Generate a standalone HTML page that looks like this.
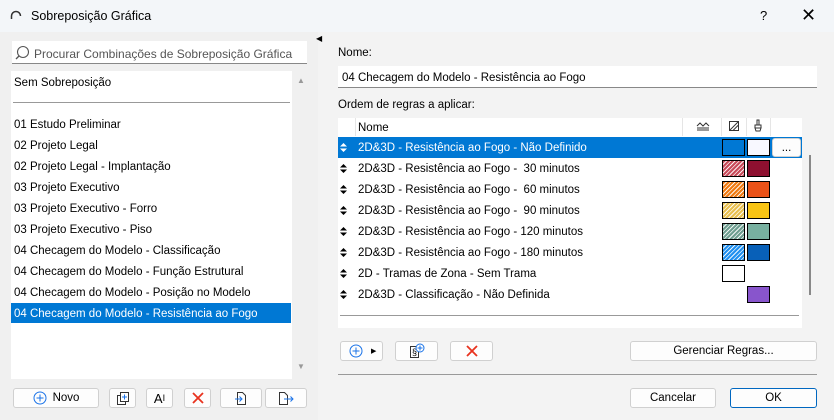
<!DOCTYPE html>
<html><head><meta charset="utf-8"><style>
*{box-sizing:border-box;margin:0;padding:0}
body{width:834px;height:420px;overflow:hidden;background:#f0f0f0;font-family:"Liberation Sans",sans-serif;font-size:11.5px;color:#000;position:relative}
.a{position:absolute}
.btn{position:absolute;background:#fdfdfd;border:1px solid #d0d0d0;border-radius:3px;display:flex;align-items:center;justify-content:center;font-size:11.5px}
.li{position:absolute;left:14px;font-size:11.5px}
.row{position:absolute;left:338px;width:464px;height:21px}
.row .ar{position:absolute;left:2px;top:6px}
.row .t{position:absolute;left:20px;top:5px;white-space:pre}
.sw{position:absolute;width:23px;height:17px;border:1px solid #000;top:2px}
.h{background-image:repeating-linear-gradient(135deg,transparent 0 2px,rgba(255,255,255,.9) 2px 3px)}
</style></head><body>
<div class="a" style="left:0;top:0;width:834px;height:32px;background:#f3f6f9"></div>
<svg class="a" style="left:10px;top:10px" width="12" height="10"><path d="M1.5 9V6A4.5 4.5 0 0 1 10.5 6" fill="none" stroke="#333" stroke-width="1.5"/></svg>
<div class="a" style="left:31px;top:9px;font-size:12.5px">Sobreposição Gráfica</div>
<div class="a" style="left:760px;top:8px;font-size:13px">?</div>
<div class="a" style="left:801px;top:5px;font-size:18px">✕</div>
<div class="a" style="left:318px;top:32px;width:516px;height:388px;background:#f3f3f3"></div>
<div class="a" style="left:316px;top:34px;font-size:8px">◀</div>
<!-- left -->
<div class="a" style="left:12px;top:41px;width:295px;height:23px;background:#fff;border-bottom:1px solid #888"></div>
<svg class="a" style="left:15px;top:45px" width="16" height="16"><circle cx="8" cy="7" r="5.5" fill="none" stroke="#555" stroke-width="1.1"/><path d="M4 11L1 14" stroke="#555" stroke-width="1.3"/></svg>
<div class="a" style="left:34px;top:47px;color:#555;font-size:12px">Procurar Combinações de Sobreposição Gráfica</div>
<div class="a" style="left:11px;top:71px;width:281px;height:308px;background:#fff"></div>
<div class="a" style="left:297px;top:76px;font-size:8px;color:#999">▲</div>
<div class="a" style="left:297px;top:362px;font-size:8px;color:#999">▼</div>
<div class="li" style="top:77px">Sem Sobreposição</div>
<div class="a" style="left:13px;top:102px;width:277px;height:1px;background:#999"></div>
<div class="li" style="top:119px">01 Estudo Preliminar</div>
<div class="li" style="top:140px">02 Projeto Legal</div>
<div class="li" style="top:161px">02 Projeto Legal - Implantação</div>
<div class="li" style="top:182px">03 Projeto Executivo</div>
<div class="li" style="top:203px">03 Projeto Executivo - Forro</div>
<div class="li" style="top:224px">03 Projeto Executivo - Piso</div>
<div class="li" style="top:245px">04 Checagem do Modelo - Classificação</div>
<div class="li" style="top:266px">04 Checagem do Modelo - Função Estrutural</div>
<div class="li" style="top:287px">04 Checagem do Modelo - Posição no Modelo</div>
<div class="a" style="left:11px;top:303px;width:280px;height:20px;background:#0078d4"></div>
<div class="li" style="top:308px;color:#fff">04 Checagem do Modelo - Resistência ao Fogo</div>
<div class="btn" style="left:13px;top:388px;width:86px;height:20px"><svg width="14" height="14" style="margin-right:6px"><circle cx="7" cy="7" r="6" fill="none" stroke="#1a73e8"/><path d="M7 3.5v7M3.5 7h7" stroke="#1a73e8"/></svg>Novo</div>
<div class="btn" style="left:109px;top:388px;width:27px;height:20px"><svg width="14" height="15"><rect x="1.5" y="4.5" width="8" height="9" fill="#fff" stroke="#333"/><rect x="4.5" y="1.5" width="8" height="9" fill="#fff" stroke="#333"/><path d="M8.5 3.5v5M6 6h5" stroke="#1a73e8"/></svg></div>
<div class="btn" style="left:146px;top:388px;width:27px;height:20px;font-size:13px">A<span style="font-size:9px;vertical-align:top">I</span></div>
<div class="btn" style="left:184px;top:388px;width:27px;height:20px"><svg width="12" height="12"><path d="M1 1L11 11M11 1L1 11" stroke="#e8321e" stroke-width="1.8"/></svg></div>
<div class="btn" style="left:220px;top:388px;width:42px;height:20px"><svg width="14" height="15"><path d="M3.5 1.5h5l3 3v9h-8z" fill="#fff" stroke="#333"/><path d="M1 8h7M5.5 5.5L8 8l-2.5 2.5" fill="none" stroke="#1a73e8"/></svg></div>
<div class="btn" style="left:265px;top:388px;width:42px;height:20px"><svg width="16" height="15"><path d="M1.5 1.5h5l3 3v9h-8z" fill="#fff" stroke="#333"/><path d="M6 8h9M12.5 5.5L15 8l-2.5 2.5" fill="none" stroke="#1a73e8"/></svg></div>
<!-- right -->
<div class="a" style="left:338px;top:47px">Nome:</div>
<div class="a" style="left:338px;top:66px;width:479px;height:22px;background:#fff;border-bottom:1px solid #888"></div>
<div class="a" style="left:342px;top:72px">04 Checagem do Modelo - Resistência ao Fogo</div>
<div class="a" style="left:338px;top:99px">Ordem de regras a aplicar:</div>
<div class="a" style="left:338px;top:118px;width:464px;height:210px;background:#fff"></div>
<div class="a" style="left:355px;top:118px;width:1px;height:18px;background:#e5e5e5"></div>
<div class="a" style="left:682px;top:118px;width:1px;height:18px;background:#e5e5e5"></div>
<div class="a" style="left:721px;top:118px;width:1px;height:18px;background:#e5e5e5"></div>
<div class="a" style="left:746px;top:118px;width:1px;height:18px;background:#e5e5e5"></div>
<div class="a" style="left:770px;top:118px;width:1px;height:18px;background:#e5e5e5"></div>
<div class="a" style="left:358px;top:122px">Nome</div>
<svg class="a" style="left:696px;top:121px" width="14" height="10"><path d="M1 5l3-3 3 3 3-3 3 3M1 7h12M1 9h12" fill="none" stroke="#333"/></svg>
<svg class="a" style="left:728px;top:120px" width="12" height="12"><rect x="1.5" y="1.5" width="9" height="9" fill="none" stroke="#333"/><path d="M1.5 10.5L10.5 1.5M5 10.5l5.5-5.5" stroke="#333"/></svg>
<svg class="a" style="left:753px;top:119px" width="10" height="13"><path d="M4 1h2v5H4zM2 6h6v3H2zM2 9h6l-1 3H3z" fill="none" stroke="#333"/></svg>
<div class="a" style="left:338px;top:137px;width:464px;height:21px;background:#0078d4"></div>
<div class="row" style="top:137px;color:#fff"><svg class="ar" width="7" height="9"><path d="M0 3.5L3.5 0 7 3.5zM0 5.5L3.5 9 7 5.5z" fill="#fff"/></svg><div class="t">2D&amp;3D - Resistência ao Fogo - Não Definido</div><div class="sw" style="left:384px;background:#0078d4"></div><div class="sw" style="left:409px;background:#f8f8ff"></div><div class="btn" style="left:434px;top:1px;width:29px;height:19px;color:#000">...</div></div>
<div class="row" style="top:158px"><svg class="ar" width="7" height="9"><path d="M0 3.5L3.5 0 7 3.5zM0 5.5L3.5 9 7 5.5z"/></svg><div class="t">2D&amp;3D - Resistência ao Fogo -  30 minutos</div><div class="sw h" style="left:384px;background-color:#c84a5a"></div><div class="sw" style="left:409px;background:#8e1030"></div></div>
<div class="row" style="top:179px"><svg class="ar" width="7" height="9"><path d="M0 3.5L3.5 0 7 3.5zM0 5.5L3.5 9 7 5.5z"/></svg><div class="t">2D&amp;3D - Resistência ao Fogo -  60 minutos</div><div class="sw h" style="left:384px;background-color:#f07a10"></div><div class="sw" style="left:409px;background:#ea5218"></div></div>
<div class="row" style="top:200px"><svg class="ar" width="7" height="9"><path d="M0 3.5L3.5 0 7 3.5zM0 5.5L3.5 9 7 5.5z"/></svg><div class="t">2D&amp;3D - Resistência ao Fogo -  90 minutos</div><div class="sw h" style="left:384px;background-color:#e8c050"></div><div class="sw" style="left:409px;background:#f8c414"></div></div>
<div class="row" style="top:221px"><svg class="ar" width="7" height="9"><path d="M0 3.5L3.5 0 7 3.5zM0 5.5L3.5 9 7 5.5z"/></svg><div class="t">2D&amp;3D - Resistência ao Fogo - 120 minutos</div><div class="sw h" style="left:384px;background-color:#6e9e90"></div><div class="sw" style="left:409px;background:#78b0a0"></div></div>
<div class="row" style="top:242px"><svg class="ar" width="7" height="9"><path d="M0 3.5L3.5 0 7 3.5zM0 5.5L3.5 9 7 5.5z"/></svg><div class="t">2D&amp;3D - Resistência ao Fogo - 180 minutos</div><div class="sw h" style="left:384px;background-color:#2090f0"></div><div class="sw" style="left:409px;background:#0860b8"></div></div>
<div class="row" style="top:263px"><svg class="ar" width="7" height="9"><path d="M0 3.5L3.5 0 7 3.5zM0 5.5L3.5 9 7 5.5z"/></svg><div class="t">2D - Tramas de Zona - Sem Trama</div><div class="sw" style="left:384px;background:#fff"></div></div>
<div class="row" style="top:284px"><svg class="ar" width="7" height="9"><path d="M0 3.5L3.5 0 7 3.5zM0 5.5L3.5 9 7 5.5z"/></svg><div class="t">2D&amp;3D - Classificação - Não Definida</div><div class="sw" style="left:409px;background:#8855cc"></div></div>
<div class="a" style="left:340px;top:315px;width:459px;height:1px;background:#999"></div>
<div class="a" style="left:809px;top:155px;width:2px;height:140px;background:#888"></div>
<div class="btn" style="left:340px;top:341px;width:43px;height:20px;justify-content:flex-start;padding-left:8px"><svg width="14" height="14"><circle cx="7" cy="7" r="6" fill="none" stroke="#1a73e8"/><path d="M7 3.5v7M3.5 7h7" stroke="#1a73e8"/></svg><span style="font-size:7px;margin-left:8px">▶</span></div>
<div class="btn" style="left:395px;top:341px;width:43px;height:20px"><svg width="16" height="16"><rect x="1.5" y="3.5" width="8" height="11" fill="#fff" stroke="#333"/><text x="3" y="12" font-size="9" font-family="Liberation Sans">§</text><circle cx="11" cy="5" r="4" fill="#fff" stroke="#1a73e8"/><path d="M11 2.5v5M8.5 5h5" stroke="#1a73e8"/></svg></div>
<div class="btn" style="left:450px;top:341px;width:43px;height:20px"><svg width="12" height="12"><path d="M1 1L11 11M11 1L1 11" stroke="#e8321e" stroke-width="1.8"/></svg></div>
<div class="btn" style="left:630px;top:341px;width:187px;height:20px">Gerenciar Regras...</div>
<div class="a" style="left:338px;top:374px;width:479px;height:1px;background:#999"></div>
<div class="btn" style="left:630px;top:388px;width:86px;height:20px">Cancelar</div>
<div class="btn" style="left:730px;top:388px;width:87px;height:20px;border-color:#0067c0">OK</div>
</body></html>
